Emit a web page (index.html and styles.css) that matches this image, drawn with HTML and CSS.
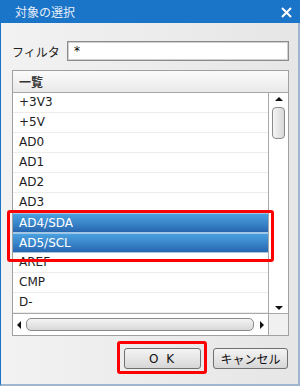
FILE: index.html
```html
<!DOCTYPE html>
<html lang="ja">
  <head>
    <meta charset="UTF-8" />
    <title>対象の選択</title>
    <link rel="stylesheet" href="styles.css">
  </head>
  <body>
    <div class="window">
      <div class="titlebar">
        <span class="title">対象の選択</span>
        <svg class="close" width="11" height="11" viewBox="0 0 11 11">
          <path d="M1 1 L10 10 M10 1 L1 10" stroke="#fff" stroke-width="2" />
        </svg>
      </div>

      <div class="content">
        <div class="filter-row">
          <label for="filter">フィルタ</label>
          <input type="text" id="filter" value="*" />
        </div>

        <div class="listbox">
          <div class="list-header">一覧</div>
          <div class="list-main">
            <ul class="rows">
              <li>+3V3</li>
              <li>+5V</li>
              <li>AD0</li>
              <li>AD1</li>
              <li>AD2</li>
              <li>AD3</li>
              <li class="selected">AD4/SDA</li>
              <li class="selected">AD5/SCL</li>
              <li>AREF</li>
              <li>CMP</li>
              <li>D-</li>
            </ul>
            <div class="vscroll">
              <span class="arrow arrow-up"></span>
              <span class="vthumb"></span>
              <span class="spacer"></span>
              <span class="arrow arrow-down"></span>
            </div>
          </div>
          <div class="hscroll-row">
            <div class="hscroll">
              <span class="arrow arrow-left"></span>
              <span class="hthumb"></span>
              <span class="arrow arrow-right"></span>
            </div>
            <div class="corner"></div>
          </div>
        </div>

        <div class="buttons">
          <button class="btn btn-ok">O K</button>
          <button class="btn">キャンセル</button>
        </div>
      </div>

      <!-- annotation frames -->
      <div class="mark mark-rows"></div>
      <div class="mark mark-ok"></div>
    </div>
  </body>
</html>
```

FILE: styles.css
```css
html, body {
  margin: 0;
  padding: 0;
}
body {
  font-family: "DejaVu Sans", "Noto Sans CJK JP", sans-serif;
  font-size: 12px;
  color: #1e1e1e;
  background: #fff;
}
.window {
  position: relative;
  width: 300px;
  height: 386px;
  box-sizing: border-box;
  border-left: 1px solid #1a74c8;
  border-right: 2px solid #9fb6d0;
  border-bottom: 2px solid #9fb6d0;
  background: linear-gradient(to right, #f2f2f2, #e6e6e6);
}
.titlebar {
  height: 23px;
  margin-left: -1px;
  margin-right: -2px;
  background: #1a74c8;
  display: flex;
  align-items: center;
  justify-content: space-between;
  padding: 0 8px 0 15px;
}
.title {
  color: #e6eef8;
  font-family: "Noto Sans CJK JP", sans-serif;
  font-size: 12px;
}
.close {
  display: block;
  margin-top: 1px;
}
.content {
  padding: 0 9px 0 11px;
}
.filter-row {
  display: flex;
  align-items: center;
  margin-top: 18px;
}
.filter-row label {
  width: 55px;
  font-family: "Noto Sans CJK JP", sans-serif;
  font-size: 12px;
  color: #222;
}
.filter-row input {
  flex: 1;
  height: 20px;
  box-sizing: border-box;
  border: 1px solid #8c8c8c;
  box-shadow: inset 0 0 0 1px #d0d0d0;
  background: #fff;
  font-family: "DejaVu Sans", sans-serif;
  font-size: 12px;
  padding: 0 6px;
  outline: none;
}
.listbox {
  margin-top: 9px;
  border: 1px solid #a0a0a0;
  background: #fff;
}
.list-header {
  height: 21px;
  border-bottom: 1px solid #a8a8a8;
  background: linear-gradient(#fbfbfb, #e9e9e9);
  font-family: "Noto Sans CJK JP", sans-serif;
  font-weight: bold;
  font-size: 12px;
  line-height: 21px;
  padding-left: 6px;
  color: #333;
}
.list-main {
  display: flex;
  height: 220px;
}
.rows {
  list-style: none;
  margin: 0;
  padding: 0;
  flex: 1;
}
.rows li {
  height: 19px;
  line-height: 19px;
  border-bottom: 1px solid #ececec;
  padding-left: 6px;
}
.rows li.selected {
  color: #fff;
  background: linear-gradient(#4aa0de, #3a86cb 50%, #2766ae);
  border-top: 1px solid #9cc8ea;
  border-bottom: 1px solid #a6c6e4;
  height: 18px;
  line-height: 18px;
}
.vscroll {
  width: 19px;
  border-left: 1px solid #a8a8a8;
  display: flex;
  flex-direction: column;
  align-items: center;
}
.spacer {
  flex: 1;
}
.arrow {
  width: 0;
  height: 0;
  border-style: solid;
}
.arrow-up {
  margin-top: 4px;
  border-width: 0 4px 4px 4px;
  border-color: transparent transparent #111 transparent;
}
.arrow-down {
  margin-bottom: 3px;
  border-width: 4px 4px 0 4px;
  border-color: #111 transparent transparent transparent;
}
.vthumb {
  margin-top: 6px;
  width: 11px;
  height: 30px;
  border: 1px solid #8a8a8a;
  border-radius: 4px;
  background: linear-gradient(to right, #f4f4f4, #d8d8d8);
}
.hscroll-row {
  display: flex;
  height: 21px;
  border-top: 1px solid #a8a8a8;
}
.hscroll {
  flex: 1;
  display: flex;
  align-items: center;
  padding: 0 4px;
}
.arrow-left {
  border-width: 4px 4px 4px 0;
  border-color: transparent #111 transparent transparent;
}
.arrow-right {
  border-width: 4px 0 4px 4px;
  border-color: transparent transparent transparent #111;
}
.hthumb {
  flex: 1;
  height: 11px;
  margin: 0 6px 0 5px;
  border: 1px solid #8a8a8a;
  border-radius: 5px;
  background: linear-gradient(#f4f4f4, #d8d8d8);
}
.corner {
  width: 19px;
  border-left: 1px solid #a8a8a8;
  background: #f0f0f0;
}
.buttons {
  display: flex;
  justify-content: flex-end;
  gap: 12px;
  margin-top: 12px;
  padding-right: 1px;
}
.btn {
  height: 21px;
  width: 75px;
  border: 1px solid #707070;
  border-radius: 3px;
  background: linear-gradient(#f4f4f4, #e6e6e6 50%, #d6d6d6);
  font-family: "Noto Sans CJK JP", sans-serif;
  font-size: 12px;
  color: #111;
  padding: 0;
  line-height: 18px;
}
.btn-ok {
  width: 77px;
  letter-spacing: 2px;
  font-family: "DejaVu Sans", sans-serif;
}
.mark {
  position: absolute;
  border: 3px solid #ff0000;
  border-radius: 3px;
  box-sizing: border-box;
}
.mark-rows {
  left: 6px;
  top: 210px;
  width: 267px;
  height: 52px;
}
.mark-ok {
  left: 116px;
  top: 341px;
  width: 90px;
  height: 33px;
}
```
